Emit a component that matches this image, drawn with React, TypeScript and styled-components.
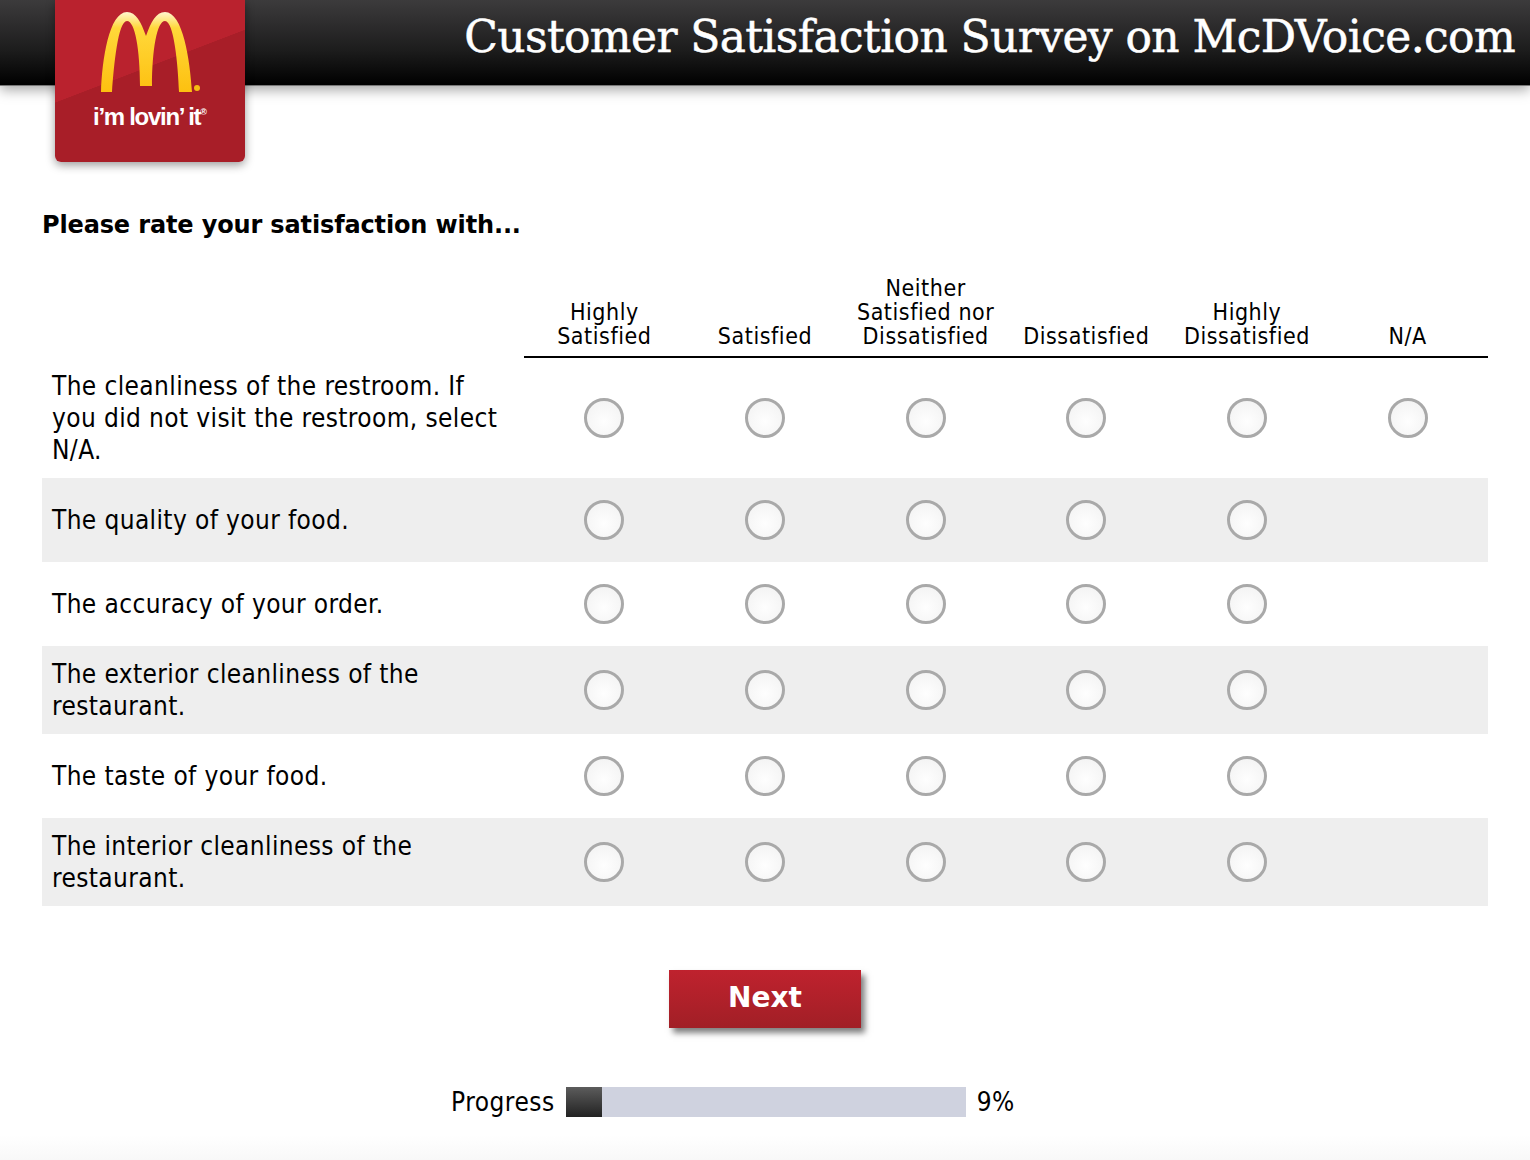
import React from "react";
import styled, { createGlobalStyle } from "styled-components";

const Global = createGlobalStyle`
  html, body { margin: 0; padding: 0; background: #fff; }
  body { font-family: "DejaVu Sans", Verdana, sans-serif; color: #000; overflow: hidden; }
`;
const Page = styled.div`
  position: relative;
  width: 1530px;
  height: 1160px;
  display: flex;
  flex-direction: column;
  background: linear-gradient(to bottom, #fff 0, #fff 1135px, #f8f8f8 1160px);
`;
const Header = styled.header`
  flex: none;
  height: 85px;
  display: flex;
  justify-content: flex-end;
  align-items: flex-start;
  padding-right: 15px;
  background: linear-gradient(to bottom, #3c3b3c 0, #2f2e2f 25%, #1c1c1c 60%, #000 100%);
  border-bottom: 1px solid #777;
  box-sizing: content-box;
  box-shadow: 0 4px 12px rgba(0, 0, 0, 0.35);
`;
const Title = styled.h1`
  margin: 8px 0 0;
  font-family: "DejaVu Serif", serif;
  font-weight: 400;
  font-size: 44px;
  line-height: 58px;
  letter-spacing: -0.62px;
  -webkit-text-stroke: 0.5px #fff;
  color: #fff;
  white-space: nowrap;
`;
const Logo = styled.div`
  position: absolute;
  left: 55px;
  top: 0;
  width: 190px;
  height: 162px;
  border-radius: 0 0 6px 6px;
  overflow: hidden;
  background: linear-gradient(159deg, #ba222e 0, #ba222e 43.6%, #a81e28 43.8%, #a81e28 100%);
  box-shadow: 0 3px 10px rgba(0, 0, 0, 0.4);
  z-index: 2;
`;
const Arches = styled.svg`
  position: absolute;
  left: 44px;
  top: 10px;
  width: 104px;
  height: 84px;
`;
const Slogan = styled.div`
  position: absolute;
  left: 0;
  right: 0;
  top: 103px;
  text-align: center;
  font-family: "Liberation Sans", Arial, sans-serif;
  font-weight: 700;
  font-size: 24px;
  line-height: 28px;
  letter-spacing: -1.3px;
  word-spacing: 0;
  color: #fff;
`;
const Mark = styled.sup`
  font-size: 9px;
  line-height: 0;
  letter-spacing: 0;
  vertical-align: 10px;
`;
const Main = styled.main`
  flex: 1;
  display: flex;
  flex-direction: column;
  padding: 0 42px;
`;
const Heading = styled.h2`
  margin: 124px 0 0;
  font-size: 24px;
  line-height: 30px;
  font-weight: 700;
  letter-spacing: -0.14px;
  font-family: "DejaVu Sans", sans-serif;
`;
const Survey = styled.table`
  margin-top: 36px;
  width: 1446px;
  table-layout: fixed;
  border-collapse: separate;
  border-spacing: 0;
  font-family: "DejaVu Sans", sans-serif;
  font-stretch: condensed;
`;
const LabelCol = styled.col`
  width: 482px;
`;
const HeadCell = styled.th`
  font-weight: 400;
  font-size: 23px;
  line-height: 24px;
  letter-spacing: 0.55px;
  padding: 0 0 8px;
  vertical-align: bottom;
  text-align: center;
  border-bottom: 2px solid #000;
`;
const BlankHead = styled.th`
  padding: 0;
`;
const Row = styled.tr<{ $h: number; $shade?: boolean }>`
  height: ${(p) => p.$h}px;
  background: ${(p) => (p.$shade ? "#eeeeee" : "#fff")};
`;
const Label = styled.td`
  padding: 0 20px 0 10px;
  font-size: 26px;
  line-height: 32px;
  letter-spacing: 0.38px;
  text-align: left;
`;
const Choice = styled.td`
  padding: 0;
  text-align: center;
  vertical-align: middle;
`;
const Radio = styled.input.attrs({ type: "radio" })`
  appearance: none;
  display: block;
  margin: 0 auto;
  width: 40px;
  height: 40px;
  box-sizing: border-box;
  border-radius: 50%;
  border: 3px solid #a9a9a9;
  background: radial-gradient(circle at 50% 60%, #fefefe 0, #f1f1f1 100%);
`;
const NextWrap = styled.div`
  margin-top: 64px;
  margin-left: 627px;
`;
const NextButton = styled.button`
  display: block;
  width: 192px;
  height: 58px;
  padding: 0 0 4px;
  border: 0;
  background: linear-gradient(to bottom, #bf222e 0, #a11f26 100%);
  box-shadow: 4px 5px 6px rgba(0, 0, 0, 0.5);
  color: #fff;
  font-family: "DejaVu Sans", sans-serif;
  font-weight: 700;
  font-size: 28px;
`;
const ProgressRow = styled.div`
  margin-top: 59px;
  margin-left: 409px;
  display: flex;
  align-items: center;
  gap: 11px;
  font-family: "DejaVu Sans", sans-serif;
  font-stretch: condensed;
  font-size: 26px;
  line-height: 30px;
  letter-spacing: 0.5px;
`;
const Track = styled.div`
  width: 400px;
  height: 30px;
  background: #cfd2df;
`;
const Fill = styled.div`
  height: 100%;
  background: linear-gradient(to bottom, #5c5c5c 0, #222 100%);
`;

const cols: React.ReactNode[] = [
  <>Highly<br />Satisfied</>,
  "Satisfied",
  <>Neither<br />Satisfied nor<br />Dissatisfied</>,
  "Dissatisfied",
  <>Highly<br />Dissatisfied</>,
  "N/A",
];
const rows = [
  { t: "The cleanliness of the restroom. If you did not visit the restroom, select N/A.", h: 120, na: true },
  { t: "The quality of your food.", h: 84 },
  { t: "The accuracy of your order.", h: 84 },
  { t: "The exterior cleanliness of the restaurant.", h: 88 },
  { t: "The taste of your food.", h: 84 },
  { t: "The interior cleanliness of the restaurant.", h: 88 },
];
const progress = 9;

export default function App() {
  return (
    <Page>
      <Global />
      <Header>
        <Title>Customer Satisfaction Survey on McDVoice.com</Title>
      </Header>
      <Logo>
        <Arches viewBox="0 0 104 84" aria-hidden="true">
          <defs>
            <linearGradient id="arch" x1="0" y1="0" x2="0" y2="1">
              <stop offset="0" stopColor="#fff6d0" />
              <stop offset="0.2" stopColor="#ffd83a" />
              <stop offset="1" stopColor="#fdc010" />
            </linearGradient>
          </defs>
          <path
            fill="url(#arch)"
            d="M2 82C3 50 10 2 28 2C37 2 42 12 47 26C52 12 57 2 66 2C84 2 91 50 93 82H80C79 55 75 11 66 11C58 11 53 40 53 76H41C41 40 36 11 28 11C19 11 15 55 13 82Z"
          />
          <circle cx="98" cy="78" r="3" fill="#f6bd12" />
        </Arches>
        <Slogan>i’m lovin’ it<Mark>®</Mark></Slogan>
      </Logo>
      <Main>
        <Heading>Please rate your satisfaction with...</Heading>
        <Survey>
          <colgroup>
            <LabelCol />
          </colgroup>
          <thead>
            <tr>
              <BlankHead />
              {cols.map((c, i) => (
                <HeadCell key={i}>{c}</HeadCell>
              ))}
            </tr>
          </thead>
          <tbody>
            {rows.map((r, i) => (
              <Row key={i} $h={r.h} $shade={i % 2 === 1}>
                <Label>{r.t}</Label>
                {cols.map((_, j) => (
                  <Choice key={j}>
                    {(j < 5 || r.na) && <Radio name={`q${i}`} aria-label={`option ${j + 1}`} />}
                  </Choice>
                ))}
              </Row>
            ))}
          </tbody>
        </Survey>
        <NextWrap>
          <NextButton>Next</NextButton>
        </NextWrap>
        <ProgressRow>
          <span>Progress</span>
          <Track>
            <Fill style={{ width: `${progress}%` }} />
          </Track>
          <span>{progress}%</span>
        </ProgressRow>
      </Main>
    </Page>
  );
}
